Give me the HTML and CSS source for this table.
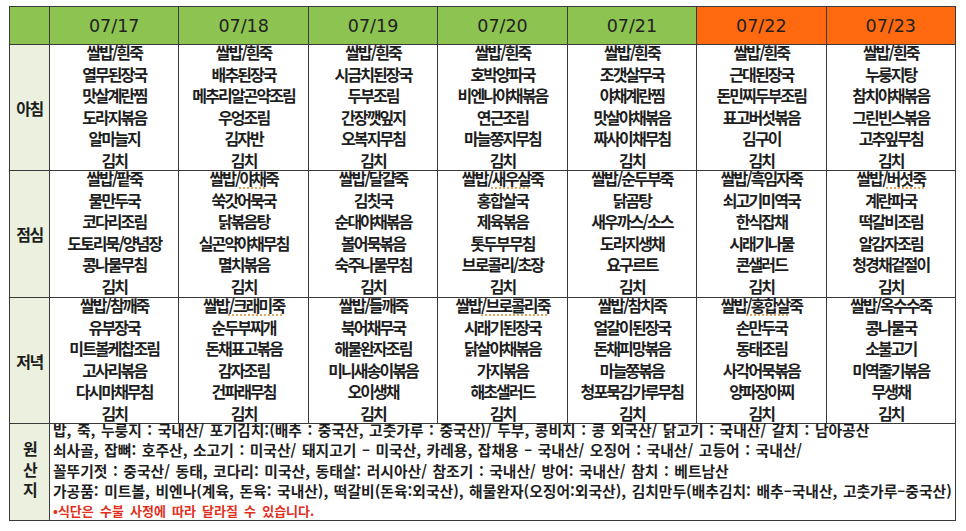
FILE: index.html
```html
<!DOCTYPE html>
<html lang="ko">
<head>
<meta charset="utf-8">
<title>주간 식단표</title>
<link rel="stylesheet" href="styles.css">
</head>
<body>
<table class="menu">
  <colgroup>
    <col class="c-label">
    <col><col><col><col><col><col><col>
  </colgroup>
  <tr class="head">
    <th></th>
    <th>07/17</th><th>07/18</th><th>07/19</th><th>07/20</th><th>07/21</th>
    <th class="we">07/22</th><th class="we">07/23</th>
  </tr>
  <tr class="meal">
    <td class="label">아침</td>
    <td class="cell"><ul><li>쌀밥/흰죽</li><li>열무된장국</li><li>맛살계란찜</li><li>도라지볶음</li><li>알마늘지</li><li>김치</li></ul></td>
    <td class="cell"><ul><li>쌀밥/흰죽</li><li>배추된장국</li><li>메추리알곤약조림</li><li>우엉조림</li><li>김자반</li><li>김치</li></ul></td>
    <td class="cell"><ul><li>쌀밥/흰죽</li><li>시금치된장국</li><li>두부조림</li><li>간장깻잎지</li><li>오복지무침</li><li>김치</li></ul></td>
    <td class="cell"><ul><li>쌀밥/흰죽</li><li>호박양파국</li><li>비엔나야채볶음</li><li>연근조림</li><li>마늘쫑지무침</li><li>김치</li></ul></td>
    <td class="cell"><ul><li>쌀밥/흰죽</li><li>조갯살무국</li><li>야채계란찜</li><li>맛살야채볶음</li><li>짜사이채무침</li><li>김치</li></ul></td>
    <td class="cell"><ul><li>쌀밥/흰죽</li><li>근대된장국</li><li>돈민찌두부조림</li><li>표고버섯볶음</li><li>김구이</li><li>김치</li></ul></td>
    <td class="cell"><ul><li>쌀밥/흰죽</li><li>누룽지탕</li><li>참치야채볶음</li><li>그린빈스볶음</li><li>고추잎무침</li><li>김치</li></ul></td>
  </tr>
  <tr class="meal mid">
    <td class="label">점심</td>
    <td class="cell"><ul><li>쌀밥/팥죽</li><li>물만두국</li><li>코다리조림</li><li>도토리묵/양념장</li><li>콩나물무침</li><li>김치</li></ul></td>
    <td class="cell"><ul><li>쌀밥/<span class="sp">야채</span>죽</li><li>쑥갓어묵국</li><li>닭볶음탕</li><li>실곤약야채무침</li><li>멸치볶음</li><li>김치</li></ul></td>
    <td class="cell"><ul><li>쌀밥/달걀죽</li><li>김칫국</li><li>순대야채볶음</li><li>볼어묵볶음</li><li>숙주나물무침</li><li>김치</li></ul></td>
    <td class="cell"><ul><li>쌀밥/<span class="sp">새우살</span>죽</li><li>홍합살국</li><li>제육볶음</li><li>톳두부무침</li><li>브로콜리/초장</li><li>김치</li></ul></td>
    <td class="cell"><ul><li>쌀밥/순두부죽</li><li>닭곰탕</li><li>새우까스/소스</li><li>도라지생채</li><li>요구르트</li><li>김치</li></ul></td>
    <td class="cell"><ul><li>쌀밥/흑임자죽</li><li>쇠고기미역국</li><li>한식잡채</li><li>시래기나물</li><li>콘샐러드</li><li>김치</li></ul></td>
    <td class="cell"><ul><li>쌀밥/<span class="sp">버섯죽</span></li><li>계란파국</li><li>떡갈비조림</li><li>알감자조림</li><li>청경채겉절이</li><li>김치</li></ul></td>
  </tr>
  <tr class="meal">
    <td class="label">저녁</td>
    <td class="cell"><ul><li>쌀밥/참깨죽</li><li>유부장국</li><li>미트볼케찹조림</li><li>고사리볶음</li><li>다시마채무침</li><li>김치</li></ul></td>
    <td class="cell"><ul><li>쌀밥<span class="sp">/크래미죽</span></li><li>순두부찌개</li><li>돈채표고볶음</li><li>감자조림</li><li>건파래무침</li><li>김치</li></ul></td>
    <td class="cell"><ul><li>쌀밥/들깨죽</li><li>북어채무국</li><li>해물완자조림</li><li>미니새송이볶음</li><li>오이생채</li><li>김치</li></ul></td>
    <td class="cell"><ul><li>쌀밥<span class="sp">/브로콜리죽</span></li><li>시래기된장국</li><li>닭살야채볶음</li><li>가지볶음</li><li>해초샐러드</li><li>김치</li></ul></td>
    <td class="cell"><ul><li>쌀밥/참치죽</li><li>얼갈이된장국</li><li>돈채피망볶음</li><li>마늘쫑볶음</li><li>청포묵김가루무침</li><li>김치</li></ul></td>
    <td class="cell"><ul><li>쌀밥<span class="sp">/홍합살</span>죽</li><li>손만두국</li><li>동태조림</li><li>사각어묵볶음</li><li>양파장아찌</li><li>김치</li></ul></td>
    <td class="cell"><ul><li>쌀밥/옥수수죽</li><li>콩나물국</li><li>소불고기</li><li>미역줄기볶음</li><li>무생채</li><li>김치</li></ul></td>
  </tr>
  <tr class="origin">
    <td class="label olabel"><div class="vlabel"><span>원</span><span>산</span><span>지</span></div></td>
    <td class="otext" colspan="7">
      <div class="olines">
        <p>밥, 죽, 누룽지 : 국내산/ 포기김치:(배추 : 중국산, 고춧가루 : 중국산)/ 두부, 콩비지 : 콩 외국산/ 닭고기 : 국내산/ 갈치 : 남아공산</p>
        <p>쇠사골, 잡뼈: 호주산, 소고기 : 미국산/ 돼지고기 – 미국산, 카레용, 잡채용 – 국내산/ 오징어 : 국내산/ 고등어 : 국내산/</p>
        <p>꼴뚜기젓 : 중국산/ 동태, 코다리: 미국산, 동태살: 러시아산/ 참조기 : 국내산/ 방어: 국내산/ 참치 : 베트남산</p>
        <p>가공품: 미트볼, 비엔나(계육, 돈육: 국내산), 떡갈비(돈육:외국산), 해물완자(오징어:외국산), 김치만두(배추김치: 배추–국내산, 고춧가루–중국산)</p>
        <p class="note">•식단은 수불 사정에 따라 달라질 수 있습니다.</p>
      </div>
    </td>
  </tr>
</table>
</body>
</html>
```

FILE: styles.css
```css
html, body {
  margin: 0;
  background: #ffffff;
}

body {
  padding: 6px 0 0 9px;
  font-family: "Noto Sans CJK KR", "Noto Sans", sans-serif;
  color: #1e1e1e;
}

.menu {
  border-collapse: collapse;
  table-layout: fixed;
  width: 947px;
}

.menu .c-label {
  width: 40px;
}

.menu th,
.menu td {
  border: 1px solid #3a3a3a;
  padding: 0;
}

.head th {
  height: 37px;
  background: #8dc451;
  font-family: "DejaVu Sans", sans-serif;
  font-weight: 400;
  font-size: 17.5px;
  color: #222222;
  text-align: center;
  vertical-align: middle;
}

.head th.we {
  background: #ff6a10;
}

.label {
  background: #ebf1de;
  text-align: center;
  vertical-align: middle;
  font-weight: 700;
  font-size: 16px;
  letter-spacing: -1.5px;
  color: #1e1e1e;
}

.meal td {
  height: 125px;
}

.meal.mid td {
  height: 126px;
}

.cell {
  vertical-align: top;
  text-align: center;
}

.cell ul {
  list-style: none;
  margin: -3px 0 -5px;
  padding: 0;
  font-size: 16px;
  font-weight: 700;
  line-height: 21.6px;
  letter-spacing: -1.9px;
  white-space: nowrap;
}

.sp {
  text-decoration: underline dotted #d9903a;
  text-underline-offset: 3px;
}

.origin td {
  height: 96px;
}

.olabel {
  vertical-align: middle;
}

.vlabel {
  display: flex;
  flex-direction: column;
  align-items: center;
  line-height: 20.5px;
  margin-top: -6px;
}

.otext {
  vertical-align: top;
  border-right-color: #7a7a7a;
  border-bottom-color: #7a7a7a;
}

.olines {
  margin: -4px 0 -3px;
  padding-left: 3px;
}

.olines p {
  margin: 0;
  font-size: 14.8px;
  font-weight: 700;
  line-height: 20.3px;
  letter-spacing: 0;
  word-spacing: 1.4px;
  white-space: nowrap;
}

.olines .note {
  color: #e0301e;
  font-size: 13px;
  letter-spacing: 0;
  word-spacing: 2.5px;
}
```
